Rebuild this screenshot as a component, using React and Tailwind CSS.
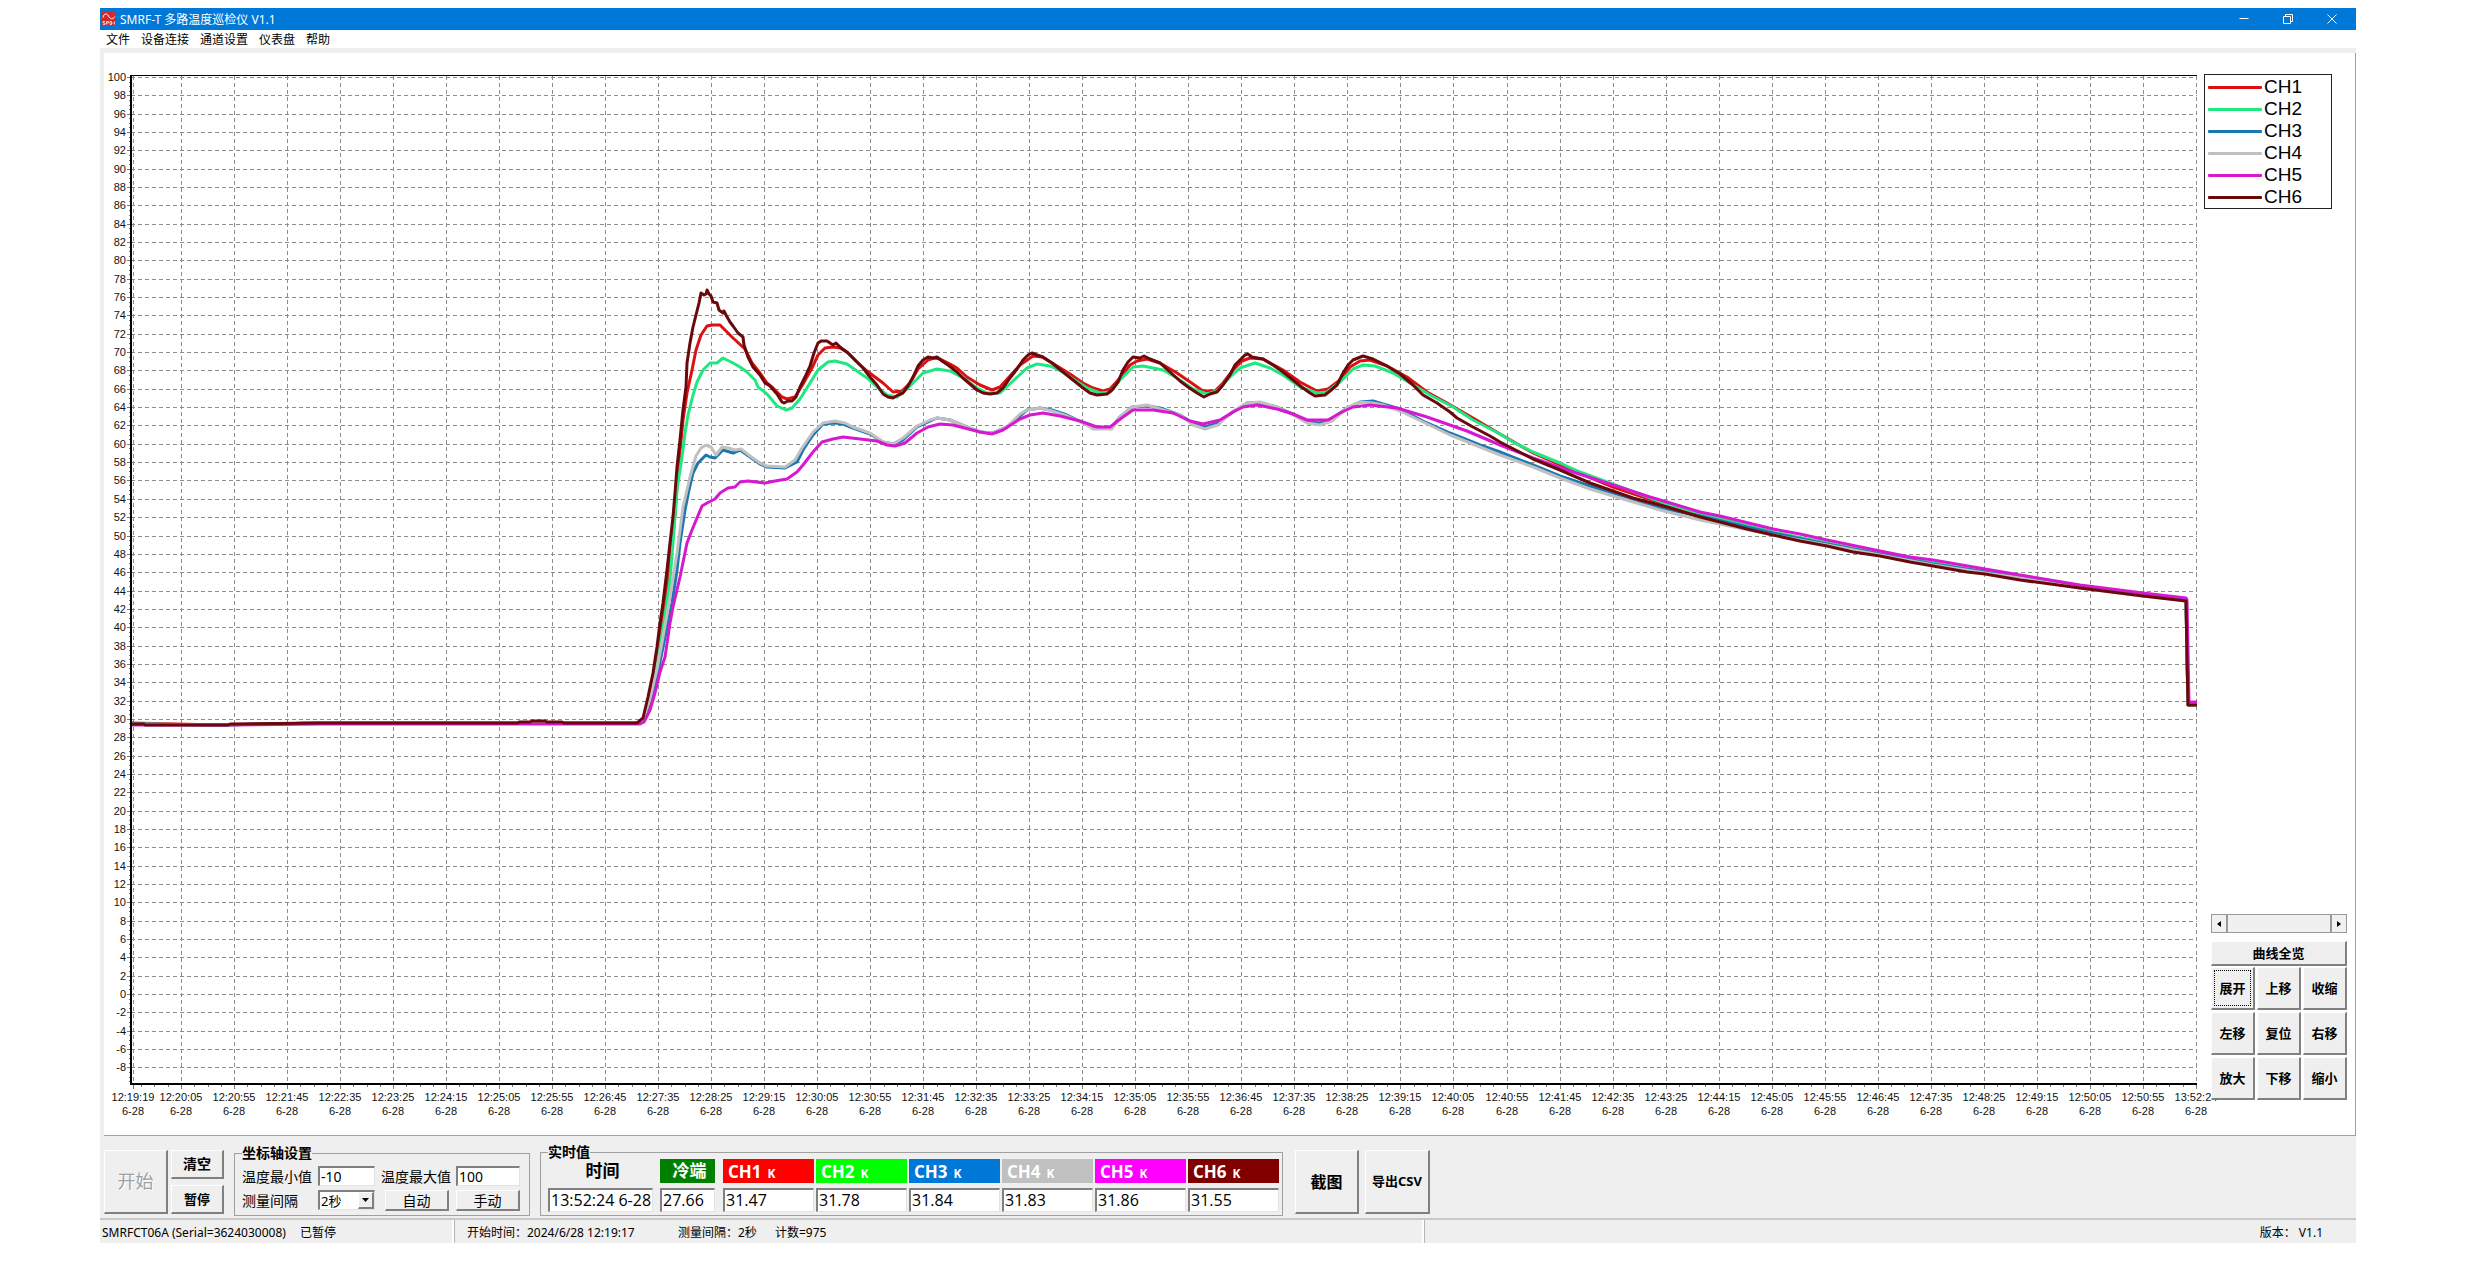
import React, { useState } from "react";

// plot area inside the chart drawing
const PLOT = { left: 131, right: 2197, top: 76, bottom: 1084 };
const GRID_START = 181;
const GRID_STEP = 53.02;

const yAt = (temp) => Math.round(77 + (100 - temp) * 9.17);

// y axis: 100 down to -8
const tempTicks = [];
for (let t = 100; t >= -8; t -= 2) tempTicks.push(t);

const pad = (n) => String(n).padStart(2, "0");
const formatTime = (seconds) =>
  `${pad(Math.floor(seconds / 3600))}:${pad(Math.floor(seconds / 60) % 60)}:${pad(seconds % 60)}`;

// x axis: one label every 50 seconds, plus first and last sample
const timeTicks = [{ x: 133, label: "12:19:19" }];
for (let i = 0; i < 38; i++) {
  timeTicks.push({
    x: Math.round(GRID_START + i * GRID_STEP),
    label: formatTime(12 * 3600 + 20 * 60 + 5 + i * 50),
  });
}
timeTicks.push({ x: 2196, label: "13:52:24" });

const minorTimeTicks = [];
for (let i = -3; i < 152; i++) minorTimeTicks.push(Math.round(GRID_START + (i * GRID_STEP) / 4));

const minorTempTicks = [];
for (let t = 99.5; t > -10; t -= 0.5) minorTempTicks.push(t);

const series = [
  {
    name: "CH1",
    color: "#dc1010",
    points:
      "131,723 220,725 320,723 500,723 637,723 643,720 650,697 657,652 663,614 670,562 675,515 678,473 683,420 687,393 692,370 696,350 701,335 707,326 712,325 720,325 725,330 733,338 745,349 752,363 760,373 767,383 773,388 782,397 787,399 795,397 803,384 812,368 818,355 825,348 833,347 840,348 847,352 857,362 867,371 883,383 893,392 902,391 910,383 918,369 928,360 934,358 940,359 950,364 957,368 967,377 980,385 992,390 1000,387 1010,376 1020,365 1033,356 1042,357 1057,366 1070,374 1083,383 1093,388 1103,391 1110,389 1120,378 1130,365 1137,361 1147,359 1160,363 1177,373 1193,384 1203,391 1215,391 1223,383 1233,370 1242,361 1250,358 1263,359 1283,370 1300,382 1317,391 1328,389 1340,380 1350,367 1360,361 1370,360 1387,366 1407,377 1427,392 1447,403 1473,418 1500,434 1533,453 1567,468 1613,487 1667,505 1720,519 1773,533 1827,544 1880,554 1933,564 1985,572 2020,577 2080,587 2143,595 2186,600 2188,705 2197,705",
  },
  {
    name: "CH2",
    color: "#20e880",
    points:
      "131,724 220,725 320,723 637,723 644,720 651,697 658,660 664,622 670,580 674,530 677,490 682,457 685,433 688,415 693,395 697,382 703,370 710,363 717,363 723,358 733,363 740,367 747,372 755,380 758,387 767,394 777,406 786,410 792,408 800,399 810,383 818,370 828,362 835,361 847,364 857,371 867,378 877,387 887,395 897,397 907,389 917,379 923,373 937,369 950,371 963,378 977,388 987,393 1000,393 1013,381 1027,368 1037,364 1050,366 1063,372 1073,379 1087,388 1100,393 1110,392 1120,380 1133,367 1143,366 1163,370 1177,378 1193,389 1207,394 1217,391 1230,377 1240,368 1255,363 1270,368 1283,375 1300,387 1317,393 1327,392 1340,382 1353,369 1363,365 1375,366 1393,373 1410,383 1430,395 1453,407 1473,420 1500,434 1513,442 1533,452 1560,463 1580,472 1607,482 1667,504 1720,519 1773,532 1827,543 1880,554 1933,563 1985,572 2020,577 2080,587 2143,595 2186,600 2188,705 2197,705",
  },
  {
    name: "CH3",
    color: "#1a78b0",
    points:
      "131,724 220,725 320,723 637,723 643,721 650,703 657,677 663,647 672,603 677,570 680,543 685,510 689,490 693,473 698,463 706,455 710,457 715,458 719,454 723,450 733,453 740,450 750,457 760,464 767,467 785,468 797,462 803,450 813,435 823,424 835,423 843,424 853,428 870,434 883,442 893,444 903,440 917,427 937,418 950,420 967,427 980,432 993,433 1007,427 1027,410 1040,408 1052,410 1067,415 1083,423 1097,428 1112,427 1120,417 1132,407 1147,406 1160,408 1180,415 1193,423 1205,427 1218,423 1233,412 1247,403 1260,403 1277,407 1293,414 1307,422 1320,423 1332,419 1347,408 1360,402 1373,401 1383,404 1400,409 1423,421 1450,433 1480,445 1500,452 1533,465 1560,476 1590,486 1623,496 1660,508 1700,516 1773,533 1827,544 1880,554 1933,564 1985,572 2020,578 2080,587 2143,595 2186,600 2188,704 2197,704",
  },
  {
    name: "CH4",
    color: "#c0c0c0",
    points:
      "131,724 220,725 320,723 637,723 643,720 650,699 657,669 663,637 670,597 677,553 683,507 690,477 696,456 701,448 706,445 711,447 716,455 722,447 728,448 735,450 741,449 750,456 760,463 767,466 785,467 795,460 802,448 813,432 823,423 835,421 845,423 853,427 870,433 883,442 893,444 903,438 917,426 930,420 937,418 950,420 967,427 980,432 993,433 1007,427 1020,414 1027,410 1040,408 1052,411 1067,416 1083,423 1093,429 1112,429 1120,417 1132,407 1147,405 1160,409 1180,415 1193,425 1205,429 1218,425 1233,411 1247,403 1260,402 1277,407 1293,415 1307,423 1320,425 1332,421 1347,408 1360,402 1373,403 1383,405 1400,411 1423,422 1450,435 1480,447 1500,455 1533,467 1560,478 1590,489 1623,499 1660,510 1700,520 1773,535 1827,545 1880,555 1933,565 1985,573 2020,578 2080,588 2143,596 2186,601 2188,704 2197,704",
  },
  {
    name: "CH5",
    color: "#d818d0",
    points:
      "131,725 220,725 320,724 500,724 640,724 644,722 650,710 655,693 660,672 665,657 670,623 673,607 680,577 687,543 692,530 697,518 702,506 707,503 715,499 720,493 728,488 735,487 740,482 748,481 765,483 775,481 787,479 797,472 803,465 813,452 822,442 833,439 843,437 860,439 877,441 887,445 895,446 905,443 917,433 928,427 940,424 953,425 980,432 992,434 1003,430 1020,419 1030,415 1043,413 1060,416 1080,421 1097,427 1110,427 1123,417 1133,410 1153,410 1173,413 1190,421 1203,424 1220,420 1233,412 1243,407 1257,405 1277,409 1293,414 1307,420 1328,420 1340,413 1353,407 1370,405 1397,408 1427,417 1467,431 1500,445 1533,458 1567,470 1613,485 1650,497 1667,502 1700,512 1720,516 1773,529 1800,534 1827,540 1880,551 1910,557 1933,560 1985,569 2020,575 2080,585 2143,593 2186,598 2187,600 2189,702 2197,702",
  },
  {
    name: "CH6",
    color: "#6a080c",
    points:
      "131,724 144,724 145,725 228,725 230,724 320,723 518,723 519,722 530,722 532,721 545,721 547,722 562,722 564,723 637,723 643,718 648,697 653,673 657,647 660,623 663,603 667,570 670,543 673,517 675,493 677,467 680,440 683,410 686,387 687,363 690,343 693,327 696,315 699,303 701,293 704,295 706,294 707,290 709,294 711,296 713,302 717,303 719,310 723,313 724,311 726,315 730,322 733,326 738,333 743,337 744,345 748,357 753,367 760,375 765,383 770,386 777,394 782,402 784,403 788,401 792,401 796,397 800,387 805,377 810,366 814,353 818,343 821,341 827,341 830,343 833,345 836,343 840,347 848,353 855,360 863,368 870,377 877,385 883,394 888,397 893,398 898,395 903,393 908,386 913,377 918,366 923,360 928,357 933,358 937,357 942,361 948,365 957,372 963,378 970,384 977,390 983,393 990,394 997,393 1003,388 1010,378 1017,369 1023,360 1028,355 1032,353 1037,355 1043,357 1052,363 1063,372 1073,380 1083,388 1090,393 1097,395 1107,394 1112,390 1118,382 1123,370 1128,362 1133,357 1140,358 1144,356 1150,359 1160,363 1170,372 1180,381 1188,387 1197,393 1204,397 1210,394 1217,392 1223,385 1230,375 1235,365 1240,360 1245,355 1248,354 1252,357 1263,359 1273,365 1283,372 1293,380 1303,388 1310,393 1315,396 1325,395 1330,391 1337,385 1343,373 1348,365 1353,360 1363,356 1373,359 1387,366 1400,374 1413,385 1423,395 1437,403 1450,412 1457,418 1473,427 1490,436 1500,442 1533,459 1560,470 1590,483 1613,491 1633,498 1667,507 1700,517 1720,522 1747,529 1773,535 1800,541 1827,546 1853,552 1880,556 1910,562 1933,566 1967,572 1985,574 2020,580 2080,588 2143,596 2186,601 2187,660 2188,705 2197,705",
  },
];

const readings = [
  { name: "CH1", value: "31.47", bg: "bg-[#ff0000]" },
  { name: "CH2", value: "31.78", bg: "bg-[#00ff00]" },
  { name: "CH3", value: "31.84", bg: "bg-[#0078d7]" },
  { name: "CH4", value: "31.83", bg: "bg-[#c0c0c0]" },
  { name: "CH5", value: "31.86", bg: "bg-[#ff00ff]" },
  { name: "CH6", value: "31.55", bg: "bg-[#800000]" },
];

const menus = ["文件", "设备连接", "通道设置", "仪表盘", "帮助"];
const moveButtons = ["展开", "上移", "收缩", "左移", "复位", "右移", "放大", "下移", "缩小"];

const raised = "border-t border-l border-r-2 border-b-2 border-t-white border-l-white border-r-[#808080] border-b-[#808080] bg-[#efefef]";
const sunken = "border-t-2 border-l-2 border-r border-b border-t-[#808080] border-l-[#808080] border-r-[#e3e3e3] border-b-[#e3e3e3] bg-white";

const TitleBar = () => (
  <header className="flex h-[22px] items-center bg-[#0078d7] pl-[2px] pr-[2px] text-white">
    <svg className="h-[14px] w-[14px]" viewBox="0 0 14 14" fill="none" stroke="#fff">
      <rect width="14" height="14" fill="#d32a2a" stroke="none" />
      <path d="M1 5.5C2 1 5 1 6.5 4S10.500 8 13 4.500" strokeWidth="1" />
      <path d="M3 9.500H1V11H3V12.500H1M4.500 12.500V9.500H6.500V11H4.500M8 9.500V12.500H9.500V9.500H8M10.200 11H11.500M12.500 9.500V12.500" strokeWidth=".7" />
    </svg>
    <h1 className="ml-1 flex-1 pt-px text-[12px] leading-4">SMRF-T 多路温度巡检仪 V1.1</h1>
    <button aria-label="Minimize" className="flex h-full w-11 items-center justify-center">
      <svg className="h-[10px] w-[10px]" viewBox="0 0 10 10" stroke="#fff"><path d="M.5 4.500H9.500" /></svg>
    </button>
    <button aria-label="Restore" className="flex h-full w-11 items-center justify-center">
      <svg className="h-[10px] w-[10px]" viewBox="0 0 10 10" fill="none" stroke="#fff">
        <path d="M.5 2.500H7.500V9.500H.5zM2.500 2.500V.5H9.500V7.500H7.500" />
      </svg>
    </button>
    <button aria-label="Close" className="flex h-full w-11 items-center justify-center">
      <svg className="h-[10px] w-[10px]" viewBox="0 0 10 10" stroke="#fff"><path d="M.5 .5L9.500 9.500M9.500 .5L.5 9.500" /></svg>
    </button>
  </header>
);

const Chart = () => (
  <svg className="block w-full overflow-visible" viewBox="104 53 2100 1082" role="img" aria-label="温度曲线">
    <g stroke="#8c8c8c" strokeWidth="1" strokeDasharray="4 3" shapeRendering="crispEdges">
      {tempTicks.map((t) => (
        <line key={t} x1={PLOT.left} x2={PLOT.right} y1={yAt(t) + 0.5} y2={yAt(t) + 0.5} />
      ))}
      {timeTicks.map(({ x, label }) => (
        <line key={label} x1={x + 0.5} x2={x + 0.5} y1={PLOT.top} y2={PLOT.bottom} />
      ))}
    </g>

    <g stroke="#777" strokeWidth="1" shapeRendering="crispEdges">
      {tempTicks.map((t) => (
        <line key={t} x1={127} x2={PLOT.left} y1={yAt(t) + 0.5} y2={yAt(t) + 0.5} />
      ))}
      {minorTempTicks.map((t) => (
        <line key={t} x1={129} x2={PLOT.left} y1={yAt(t) + 0.5} y2={yAt(t) + 0.5} />
      ))}
      {timeTicks.map(({ x, label }) => (
        <line key={label} x1={x + 0.5} x2={x + 0.5} y1={PLOT.bottom} y2={1089} />
      ))}
      {minorTimeTicks.map((x) => (
        <line key={x} x1={x + 0.5} x2={x + 0.5} y1={PLOT.bottom} y2={1087} />
      ))}
    </g>

    <g fill="none" strokeWidth="3" strokeLinejoin="round">
      {series.map((s) => (
        <polyline key={s.name} points={s.points} stroke={s.color} />
      ))}
    </g>

    <g stroke="#000" shapeRendering="crispEdges">
      <line x1={130} x2={PLOT.right} y1={75.5} y2={75.5} strokeWidth="1" />
      <line x1={131} x2={131} y1={75} y2={1085} strokeWidth="2" />
      <line x1={130} x2={PLOT.right} y1={1084} y2={1084} strokeWidth="2" />
    </g>

    <g className="font-['Liberation_Sans',sans-serif] text-[11px]" fill="#111">
      {tempTicks.map((t) => (
        <text key={t} x={126} y={yAt(t) + 4} textAnchor="end">{t}</text>
      ))}
      {timeTicks.map(({ x, label }) => (
        <g key={label} textAnchor="middle">
          <text x={x} y={1101}>{label}</text>
          <text x={x} y={1115}>6-28</text>
        </g>
      ))}
    </g>
  </svg>
);

const Legend = () => (
  <ul className="mr-[23px] border border-[#222] pt-px font-['Liberation_Sans',sans-serif] text-[19px] leading-[22px] text-black">
    {series.map((s) => (
      <li key={s.name} className="flex items-center gap-[2px] pl-[3px]">
        <svg className="h-[3px] w-[54px]" viewBox="0 0 54 3">
          <rect width="54" height="3" rx="1" fill={s.color} />
        </svg>
        {s.name}
      </li>
    ))}
  </ul>
);

const Sidebar = () => (
  <aside className="flex w-[151px] shrink-0 flex-col pt-[21px] pb-[35px]">
    <Legend />
    <div className="mt-auto ml-[7px] mr-2">
      <div className="flex h-[19px] border border-[#999] bg-[#f0f0f0]">
        <button aria-label="向左" className="flex w-4 items-center justify-center border-r-2 border-[#999]">
          <svg className="h-[6px] w-[4px]" viewBox="0 0 4 6"><path d="M4 0V6L0 3z" /></svg>
        </button>
        <div className="flex-1" />
        <button aria-label="向右" className="flex w-4 items-center justify-center border-l-2 border-[#999]">
          <svg className="h-[6px] w-[4px]" viewBox="0 0 4 6"><path d="M0 0V6L4 3z" /></svg>
        </button>
      </div>
      <button className={`mt-2 h-[25px] w-full text-[13px] leading-4 font-bold ${raised}`}>曲线全览</button>
      <div className="mt-px grid grid-cols-3 gap-x-[2px] gap-y-[2px]">
        {moveButtons.map((label, i) => (
          <button
            key={label}
            className={`flex h-[43px] p-[2px] text-[13px] leading-4 font-bold ${raised}`}
          >
            <span
              className={`flex h-full w-full items-center justify-center border border-dotted ${i === 0 ? "border-black" : "border-transparent"}`}
            >
              {label}
            </span>
          </button>
        ))}
      </div>
    </div>
  </aside>
);

const AxisSettings = () => {
  const [minTemp, setMinTemp] = useState("-10");
  const [maxTemp, setMaxTemp] = useState("100");

  return (
    <fieldset className="ml-[10px] border border-[#a0a0a0] pl-[7px] pr-[9px]">
      <legend className="text-[14px] leading-[14px] font-bold">坐标轴设置</legend>
      <div className="grid grid-cols-[76px_57px_10px_71px_64px] pt-[6px] pb-[3px] text-[14px] leading-[21px]">
        <label htmlFor="min-temp">温度最小值</label>
        <input
          id="min-temp"
          value={minTemp}
          onChange={(e) => setMinTemp(e.target.value)}
          className={`h-[20px] w-full pl-px ${sunken}`}
        />
        <span />
        <label htmlFor="max-temp" className="-ml-1">温度最大值</label>
        <input
          id="max-temp"
          value={maxTemp}
          onChange={(e) => setMaxTemp(e.target.value)}
          className={`h-[20px] w-full pl-px ${sunken}`}
        />
      </div>
      <div className="grid grid-cols-[76px_57px_10px_64px_7px_64px] pb-1 text-[14px] leading-[21px]">
        <label htmlFor="interval">测量间隔</label>
        <div className={`relative h-[20px] ${sunken}`}>
          <select id="interval" className="block h-full w-full appearance-none pl-px text-[13px] leading-4">
            <option>2秒</option>
          </select>
          <span className={`pointer-events-none absolute top-0 right-0 bottom-0 flex w-4 items-center justify-center ${raised}`}>
            <svg className="h-[4px] w-[7px]" viewBox="0 0 7 4"><path d="M0 0H7L3.500 4z" /></svg>
          </span>
        </div>
        <span />
        <button className={`flex h-[21px] items-center justify-center ${raised}`}>自动</button>
        <span />
        <button className={`flex h-[21px] items-center justify-center ${raised}`}>手动</button>
      </div>
    </fieldset>
  );
};

const Realtime = () => (
  <fieldset className="ml-[10px] border border-[#a0a0a0] pl-[7px] pr-[3px]">
    <legend className="text-[14px] leading-[14px] font-bold">实时值</legend>
    <div className="flex pb-[3px] font-['Open_Sans','Noto_Sans_CJK_SC',sans-serif]">
      <div className="mr-[7px] w-[105px]">
        <label htmlFor="time" className="flex h-[24px] items-center justify-center pl-1 text-[17px] leading-6 font-bold">时间</label>
        <input id="time" readOnly value="13:52:24 6-28" className={`mt-[5px] block h-[24px] w-full pb-[2px] pl-px text-[16px] ${sunken}`} />
      </div>
      <div className="mr-2 w-[55px]">
        <label htmlFor="cold" className="flex h-[24px] items-center justify-center bg-[#008000] pl-1 text-[17px] leading-6 font-bold text-white">冷端</label>
        <input id="cold" readOnly value="27.66" className={`mt-[5px] block h-[24px] w-full pb-[2px] pl-px text-[16px] ${sunken}`} />
      </div>
      <div className="flex gap-[2px]">
        {readings.map((r) => (
          <div key={r.name} className="w-[91px]">
            <label
              htmlFor={r.name}
              className={`flex h-[24px] items-baseline gap-[6px] pl-[5px] text-[17px] leading-[26px] font-bold text-white ${r.bg}`}
            >
              {r.name}
              <span className="text-[12px]">K</span>
            </label>
            <input id={r.name} readOnly value={r.value} className={`mt-[5px] block h-[24px] w-full pb-[2px] pl-px text-[16px] ${sunken}`} />
          </div>
        ))}
      </div>
    </div>
  </fieldset>
);

const Toolbar = () => (
  <div className="flex items-end pt-[9px] pb-[2px] pl-1">
    <button disabled className={`mb-[2px] h-[64px] w-[64px] text-[18px] text-[#a0a0a0] [text-shadow:1px_1px_#fff] ${raised}`}>开始</button>
    <div className="mb-[2px] ml-[3px] flex h-[64px] w-[53px] flex-col justify-between text-[14px] leading-4 font-bold">
      <button className={`h-[29px] ${raised}`}>清空</button>
      <button className={`h-[29px] text-[13px] ${raised}`}>暂停</button>
    </div>
    <AxisSettings />
    <Realtime />
    <button className={`mb-[2px] ml-3 h-[64px] w-[64px] text-[16px] font-bold ${raised}`}>截图</button>
    <button className={`mb-[2px] ml-[6px] h-[64px] w-[65px] text-[13px] font-bold ${raised}`}>导出CSV</button>
  </div>
);

const StatusBar = () => (
  <footer className="flex h-[25px] border-t-2 border-[#c8c8c8] text-[12px] leading-[25px]">
    <div className="flex w-[354px] gap-[14px] border-r-2 border-white pl-[2px]">
      <span>SMRFCT06A (Serial=3624030008)</span>
      <span>已暂停</span>
    </div>
    <div className="flex w-[970px] border-r-2 border-l border-r-white border-l-[#b4b4b4] pl-3">
      <span className="w-[211px]">开始时间：2024/6/28 12:19:17</span>
      <span className="w-[97px]">测量间隔：2秒</span>
      <span>计数=975</span>
    </div>
    <div className="flex flex-1 justify-end border-l border-[#b4b4b4] pr-[33px]">
      <span>版本： V1.1</span>
    </div>
  </footer>
);

const App = () => {
  return (
    <div className="bg-white pt-2 pr-[124px] pb-8 pl-[100px] font-['Noto_Sans','Noto_Sans_CJK_SC',sans-serif] text-black">
      <div className="bg-[#efefef]">
        <TitleBar />
        <nav className="flex h-[18px] items-center gap-[11px] bg-white pt-[2px] pl-[6px] text-[12px] leading-4">
          {menus.map((m) => (
            <button key={m}>{m}</button>
          ))}
        </nav>
        <main className="mt-[5px] ml-1 flex border-r border-b border-[#a0a0a0] bg-white">
          <div className="min-w-0 flex-1">
            <Chart />
          </div>
          <Sidebar />
        </main>
        <Toolbar />
        <StatusBar />
      </div>
    </div>
  );
};

export default App;
